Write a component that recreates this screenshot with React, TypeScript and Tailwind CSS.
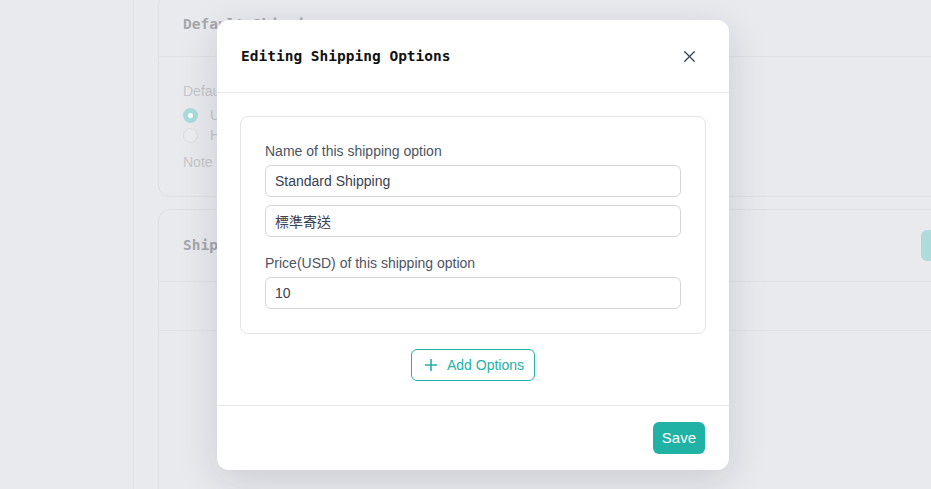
import { X } from "lucide-react";

const mono = "font-['DejaVu_Sans_Mono','Liberation_Mono',monospace]";

function BackgroundPage() {
  return (
    <div className="flex h-full">
      <aside className="w-[134px] shrink-0 border-r border-[#e1e2e6]" />
      <main className="flex flex-col gap-3 pl-6">
        <section className="-mt-2 w-[868px] shrink-0 rounded-xl border border-[#dfe0e4]">
          <div className="flex h-16 items-center border-b border-[#e1e2e6] px-6">
            <h2 className={`${mono} text-[14.5px] font-bold text-[#a6a7ab]`}>Default Shipping</h2>
          </div>
          <div className="px-6 pt-6 pb-6 text-sm text-[#c6c7cb]">
            <p className="leading-5">Default</p>
            <div className="mt-1 flex h-5 items-center gap-3">
              <span className="flex h-[15px] w-[15px] items-center justify-center rounded-full bg-[#a9dcdb]">
                <span className="h-[5px] w-[5px] rounded-full bg-white" />
              </span>
              <span>USA</span>
            </div>
            <div className="flex h-5 items-center gap-3">
              <span className="h-[15px] w-[15px] rounded-full border border-[#dcdde1] bg-[#ecedf0]" />
              <span>HK</span>
            </div>
            <p className="mt-[7px] leading-5">Note that</p>
          </div>
        </section>

        <section className="h-[520px] w-[868px] shrink-0 rounded-xl border border-[#dfe0e4]">
          <div className="flex h-[72px] items-center justify-between border-b border-[#e1e2e6] px-6">
            <h2 className={`${mono} text-[14.5px] font-bold text-[#a6a7ab]`}>Shipping Options</h2>
            <span className="h-[31px] w-20 rounded-md bg-[#aedbdc]" />
          </div>
          <div className="h-[49px] border-b border-[#e1e2e6]" />
        </section>
      </main>
    </div>
  );
}

function Field({ value, className = "" }: { value: string; className?: string }) {
  return (
    <input
      readOnly
      value={value}
      className={`block h-8 w-full rounded-md border border-[#d4d5dc] px-[9px] text-sm text-[#374151] outline-none ${className}`}
    />
  );
}

export default function App() {
  return (
    <div className="relative h-[489px] w-[931px] overflow-hidden bg-[#e9eaee] font-['Liberation_Sans','Noto_Sans_CJK_TC',Arial,sans-serif]">
      <BackgroundPage />

      <div className="absolute inset-0 flex justify-center pt-5 pl-[15px]">
        <div className="h-fit w-[512px] rounded-xl bg-white shadow-[0_10px_40px_rgba(15,23,42,0.14)]">
          <div className="flex h-[73px] items-center justify-between border-b border-[#e5e7eb] px-6 pt-px">
            <h1 className={`${mono} text-[14.5px] font-bold text-[#111]`}>Editing Shipping Options</h1>
            <button type="button" className="flex h-8 w-8 items-center justify-center text-[#334155]">
              <X size={19} strokeWidth={1.5} />
            </button>
          </div>

          <div className="px-[23px] pt-[23px] pb-6">
            <div className="rounded-lg border border-[#e3e4e8] p-6">
              <label className="mb-1 block text-sm leading-5 text-[#4b5563]">Name of this shipping option</label>
              <Field value="Standard Shipping" />
              <Field value="標準寄送" className="mt-2" />
              <label className="mt-4 mb-1 block text-sm leading-5 text-[#4b5563]">Price(USD) of this shipping option</label>
              <Field value="10" />
            </div>

            <div className="mt-[15px] flex justify-center">
              <button
                type="button"
                className="flex h-8 items-center gap-[10px] rounded-md border border-[#20b2a5] pr-[10px] pl-[13px] text-sm text-[#20b2a5]"
              >
                <svg width="12" height="12" viewBox="0 0 12 12" fill="none" stroke="currentColor" strokeWidth="1.6">
                  <path d="M6 0v12M0 6h12" />
                </svg>
                Add Options
              </button>
            </div>
          </div>

          <div className="flex justify-end border-t border-[#e5e7eb] px-6 py-4">
            <button type="button" className="h-8 rounded-md bg-[#20b2a5] px-[9px] text-[15px] text-white">
              Save
            </button>
          </div>
        </div>
      </div>
    </div>
  );
}
